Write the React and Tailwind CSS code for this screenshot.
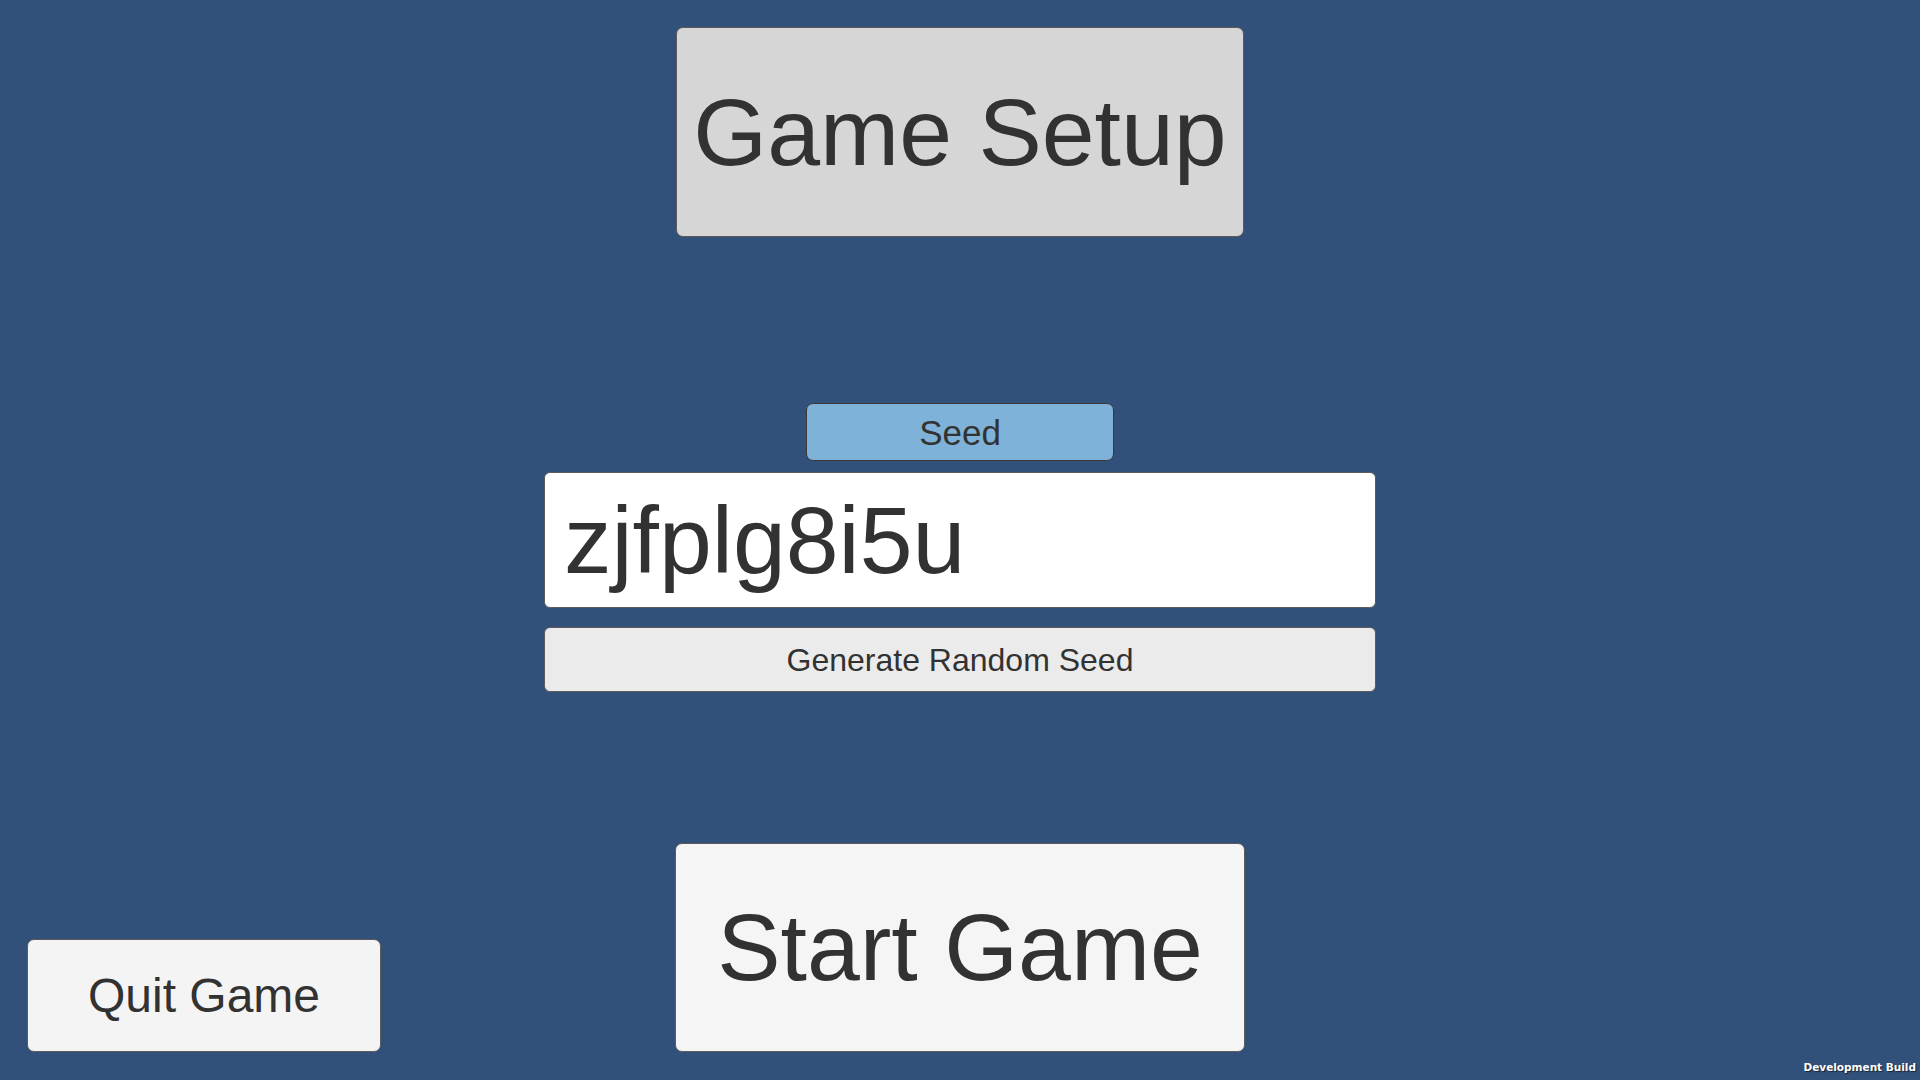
export default function App() {
  const font = { fontFamily: '"Liberation Sans", Arial, sans-serif' };
  return (
    <div
      className="relative w-full h-screen overflow-hidden bg-[#31507a] text-[#323232] flex flex-col items-center"
      style={font}
    >
      <div className="mt-[27px] w-[568px] h-[210px] rounded-[7px] border border-[#5c5c5c] bg-[#d6d6d6] flex items-center justify-center text-[95px] leading-none">
        Game Setup
      </div>

      <div className="mt-[166px] w-[308px] h-[58px] rounded-[7px] border border-[#3a3a3a] bg-[#7fb2d8] flex items-center justify-center text-[35px] leading-none">
        Seed
      </div>

      <div className="mt-[11px] w-[832px] h-[136px] rounded-[6px] border border-[#5c5c5c] bg-white flex items-center pl-[19px] text-[95px] leading-none">
        zjfplg8i5u
      </div>

      <div className="mt-[19px] w-[832px] h-[65px] rounded-[6px] border border-[#5c5c5c] bg-[#ebebeb] flex items-center justify-center text-[32px] leading-none">
        Generate Random Seed
      </div>

      <div className="mt-[151px] w-full grid grid-cols-[1fr_570px_1fr] items-end">
        <div className="pl-[27px]">
          <div className="w-[354px] h-[113px] rounded-[7px] border border-[#5c5c5c] bg-[#f4f4f4] flex items-center justify-center text-[48px] leading-none">
            Quit Game
          </div>
        </div>
        <div className="w-[570px] h-[209px] rounded-[7px] border border-[#5c5c5c] bg-[#f5f5f5] flex items-center justify-center text-[95px] leading-none">
          Start Game
        </div>
        <div></div>
      </div>

      <div
        className="absolute right-[4px] bottom-[8px] text-white text-[10.5px] font-bold leading-none [text-shadow:1px_1px_1px_rgba(0,0,0,0.6)]"
        style={{ fontFamily: '"DejaVu Sans", sans-serif' }}
      >
        Development Build
      </div>
    </div>
  );
}
